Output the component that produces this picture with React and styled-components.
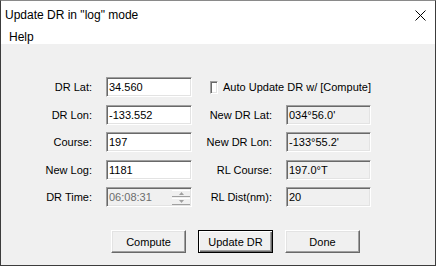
import React from "react";
import styled, { createGlobalStyle } from "styled-components";

const GlobalStyle = createGlobalStyle`
  html, body {
    margin: 0;
    padding: 0;
    background: #ffffff;
  }
`;

const Window = styled.div`
  width: 436px;
  height: 266px;
  box-sizing: border-box;
  border: 1px solid #3c3c3c;
  border-top-color: #8a8a8a;
  display: flex;
  flex-direction: column;
  background: #f0f0f0;
  overflow: hidden;
`;

const TitleBar = styled.div`
  height: 28px;
  background: #ffffff;
  display: flex;
  align-items: center;
  justify-content: space-between;
  padding: 0 9px 0 4px;
  font-family: "Liberation Sans", Arial, sans-serif;
  font-size: 12px;
  color: #000;
`;

const CloseIcon = styled.svg`
  width: 11px;
  height: 11px;
  margin-right: 0;
`;

const MenuBar = styled.div`
  height: 15px;
  background: #ffffff;
  display: flex;
  align-items: center;
  padding: 0 8px 0 8px;
  font-family: "Liberation Sans", Arial, sans-serif;
  font-size: 12px;
`;

const Body = styled.div`
  flex: 1;
  padding-top: 33px;
  font-family: "Liberation Sans", Arial, sans-serif;
  font-size: 11px;
  color: #000;
`;

const Grid = styled.div`
  display: grid;
  grid-template-columns: 91px 86px 66px 85px;
  grid-auto-rows: 20px;
  column-gap: 14px;
  row-gap: 7.5px;
`;

const Label = styled.div`
  display: flex;
  align-items: center;
  justify-content: flex-end;
  white-space: nowrap;
`;

const Field = styled.div`
  box-sizing: border-box;
  height: 20px;
  display: flex;
  align-items: center;
  padding-left: 1px;
  border: 1px solid;
  border-color: #a0a0a0 #ffffff #ffffff #a0a0a0;
  box-shadow: inset 1px 1px 0 #696969, inset -1px -1px 0 #e3e3e3;
  background: ${(p) => (p.$readOnly || p.$disabled ? "#f0f0f0" : "#ffffff")};
  color: ${(p) => (p.$disabled ? "#6d6d6d" : "#000")};
  white-space: nowrap;
  overflow: hidden;
`;

const FieldText = styled.span`
  flex: 1;
  padding-left: 1px;
`;

const Spin = styled.div`
  display: flex;
  flex-direction: column;
  gap: 1px;
  width: 18px;
  margin-right: 1px;
`;

const SpinButton = styled.div`
  height: 7px;
  box-sizing: border-box;
  border-top: 1px solid #ffffff;
  border-bottom: 1px solid #a0a0a0;
  background: #f0f0f0;
  display: flex;
  align-items: center;
  justify-content: center;
`;

const CheckRow = styled.label`
  grid-column: 3 / span 2;
  display: flex;
  align-items: center;
  gap: 5px;
  padding-left: 4px;
  white-space: nowrap;
`;

const CheckBox = styled.span`
  width: 13px;
  height: 13px;
  box-sizing: border-box;
  border: 1px solid;
  border-color: #a0a0a0 #ffffff #ffffff #a0a0a0;
  box-shadow: inset 1px 1px 0 #696969, inset -1px -1px 0 #e3e3e3;
  background: #ffffff;
`;

const ButtonRow = styled.div`
  display: flex;
  gap: 12px;
  padding-left: 110px;
  margin-top: 23px;
`;

const Button = styled.div`
  box-sizing: border-box;
  width: 75px;
  height: 23px;
  display: flex;
  align-items: center;
  justify-content: center;
  background: #f0f0f0;
  border: 1px solid;
  border-color: ${(p) =>
    p.$default ? "#000" : "#ffffff #696969 #696969 #ffffff"};
  box-shadow: ${(p) =>
    p.$default
      ? "inset 1px 1px 0 #ffffff, inset -1px -1px 0 #696969, inset -2px -2px 0 #a0a0a0"
      : "inset -1px -1px 0 #a0a0a0, inset 1px 1px 0 #e3e3e3"};
`;

const Arrow = ({ up }) => (
  <svg width="5" height="3" viewBox="0 0 5 3">
    <path d={up ? "M2.5 0 L5 3 L0 3 Z" : "M0 0 L5 0 L2.5 3 Z"} fill="#a0a0a0" />
  </svg>
);

export default function App() {
  return (
    <>
      <GlobalStyle />
      <Window>
        <TitleBar>
          <span>Update DR in "log" mode</span>
          <CloseIcon viewBox="0 0 11 11">
            <path d="M0.5 0.5 L10.5 10.5 M10.5 0.5 L0.5 10.5" stroke="#000" strokeWidth="1" />
          </CloseIcon>
        </TitleBar>
        <MenuBar>Help</MenuBar>
        <Body>
          <Grid>
            <Label>DR Lat:</Label>
            <Field>
              <FieldText>34.560</FieldText>
            </Field>
            <CheckRow>
              <CheckBox />
              Auto Update DR w/ [Compute]
            </CheckRow>

            <Label>DR Lon:</Label>
            <Field>
              <FieldText>-133.552</FieldText>
            </Field>
            <Label>New DR Lat:</Label>
            <Field $readOnly>
              <FieldText>034°56.0'</FieldText>
            </Field>

            <Label>Course:</Label>
            <Field>
              <FieldText>197</FieldText>
            </Field>
            <Label>New DR Lon:</Label>
            <Field $readOnly>
              <FieldText>-133°55.2'</FieldText>
            </Field>

            <Label>New Log:</Label>
            <Field>
              <FieldText>1181</FieldText>
            </Field>
            <Label>RL Course:</Label>
            <Field $readOnly>
              <FieldText>197.0°T</FieldText>
            </Field>

            <Label>DR Time:</Label>
            <Field $disabled>
              <FieldText>06:08:31</FieldText>
              <Spin>
                <SpinButton>
                  <Arrow up />
                </SpinButton>
                <SpinButton>
                  <Arrow />
                </SpinButton>
              </Spin>
            </Field>
            <Label>RL Dist(nm):</Label>
            <Field $readOnly>
              <FieldText>20</FieldText>
            </Field>
          </Grid>
          <ButtonRow>
            <Button>Compute</Button>
            <Button $default>Update DR</Button>
            <Button>Done</Button>
          </ButtonRow>
        </Body>
      </Window>
    </>
  );
}
